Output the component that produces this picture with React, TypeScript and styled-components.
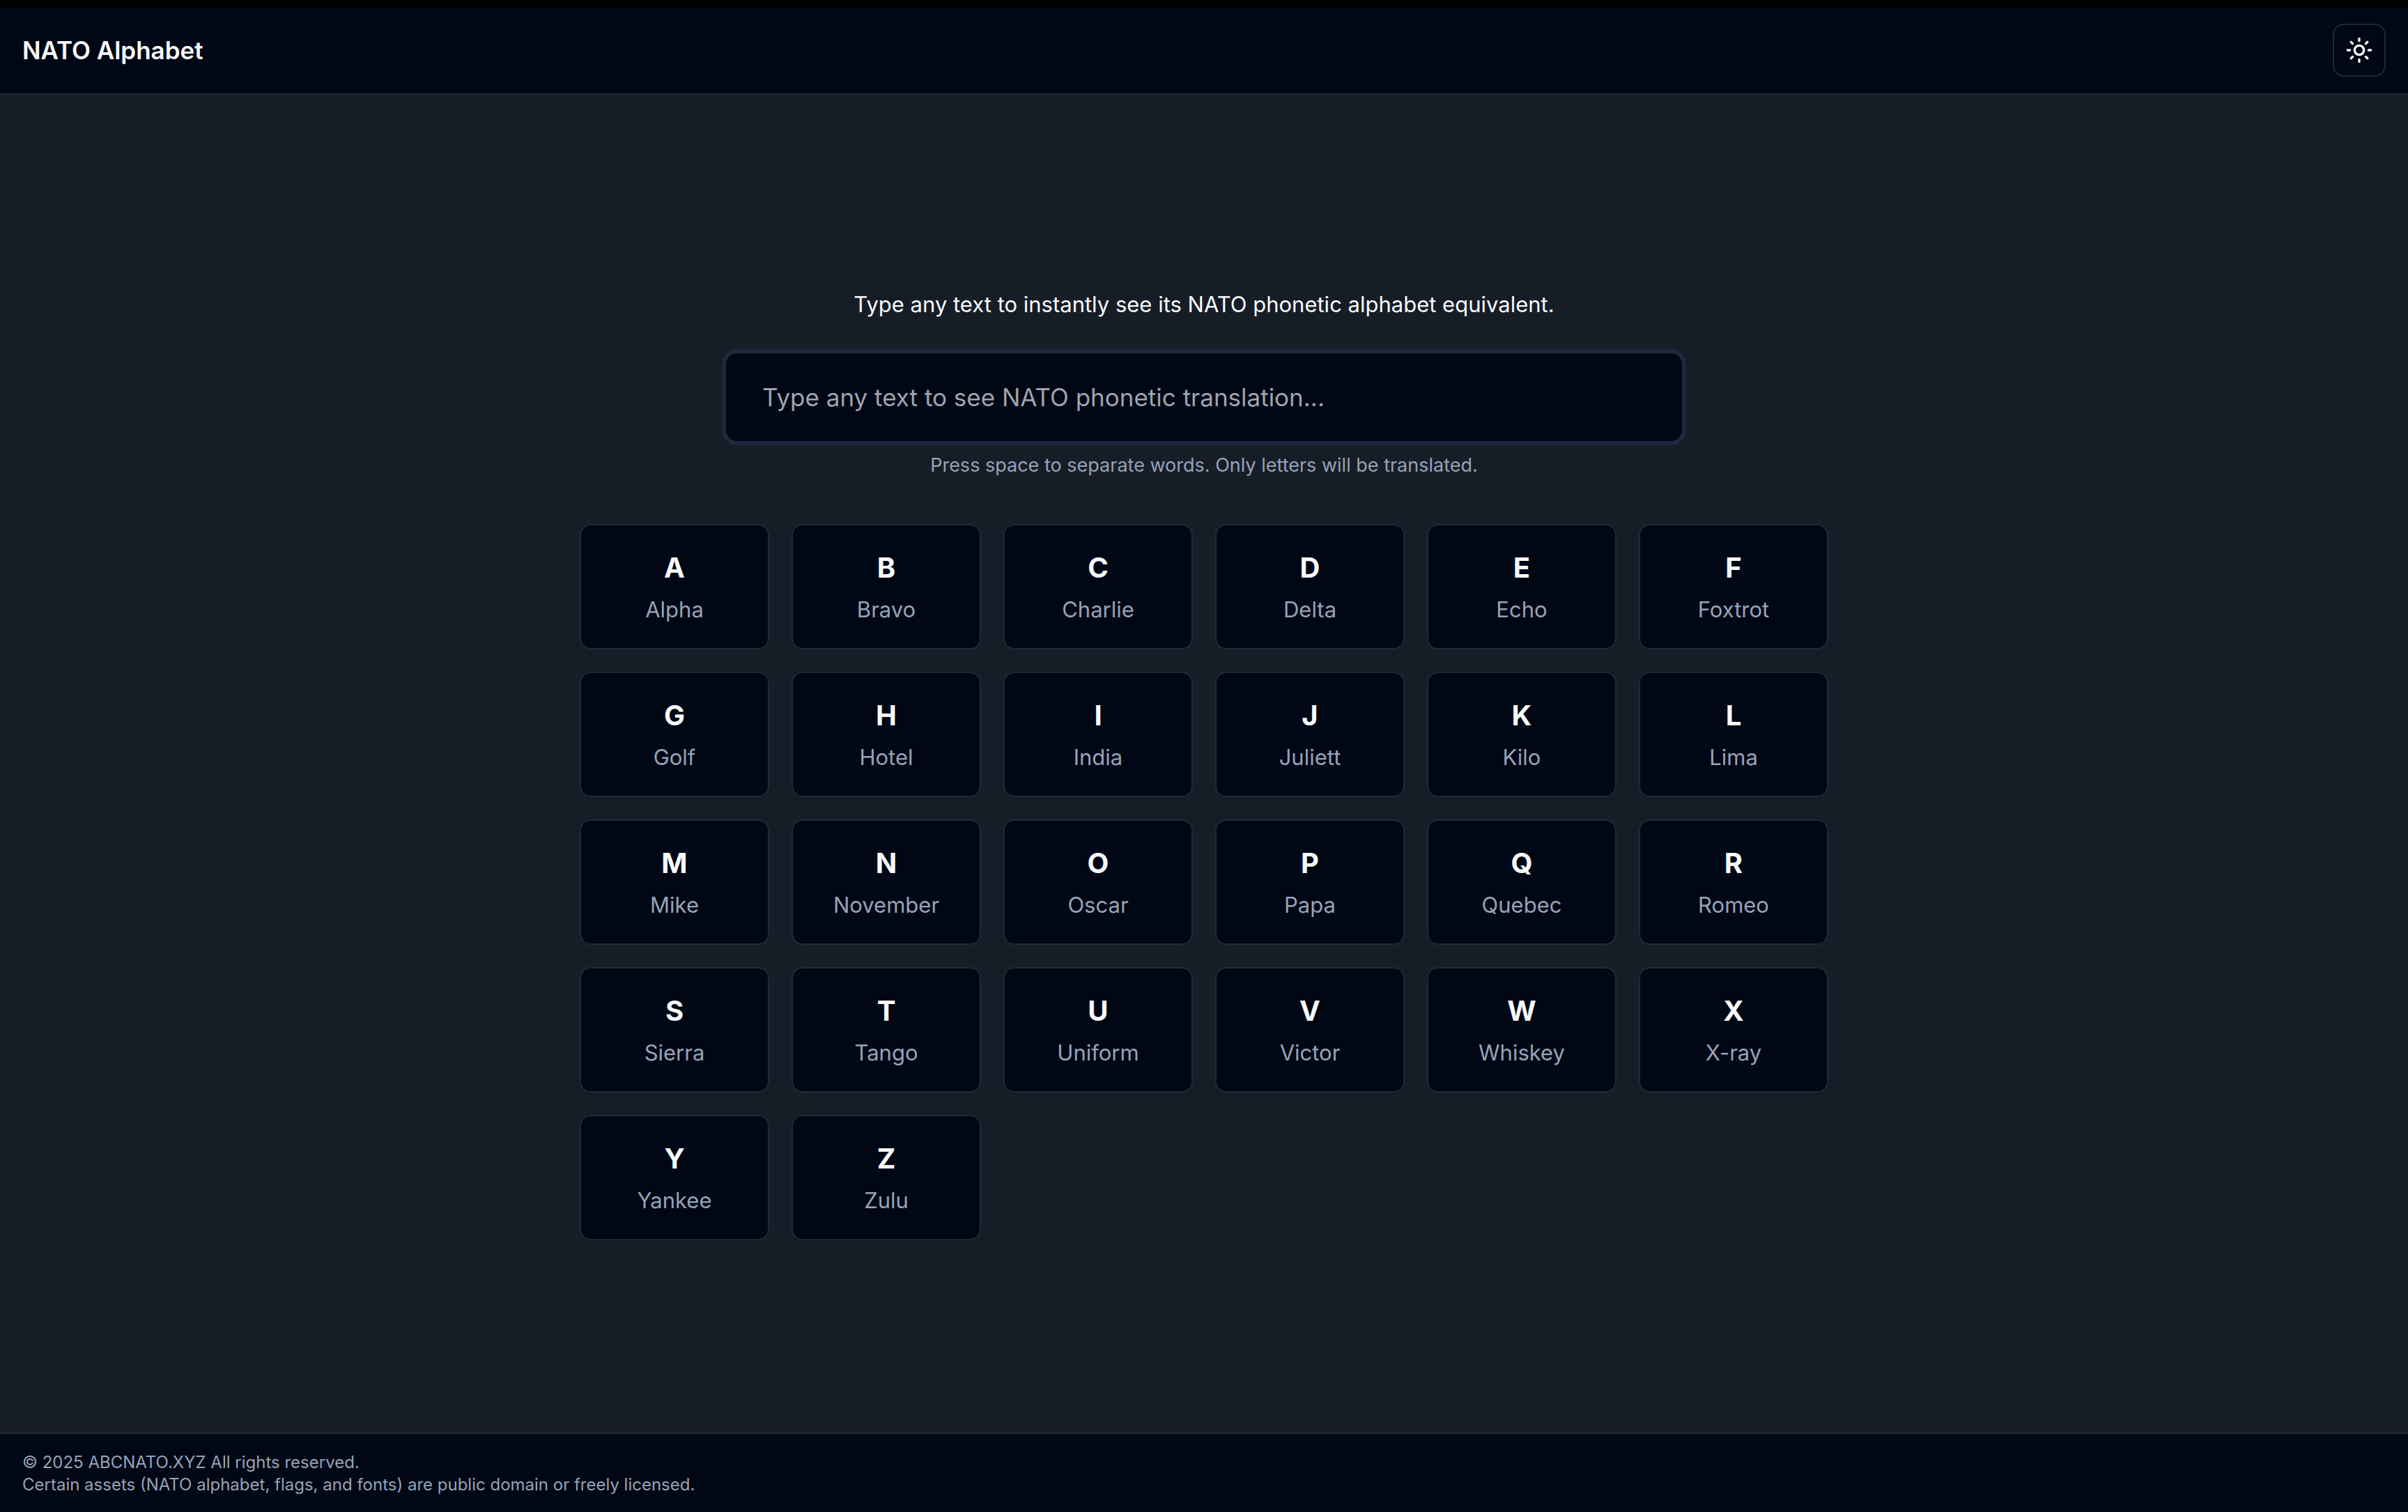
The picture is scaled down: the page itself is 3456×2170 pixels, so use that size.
import React, { useState } from "react";
import styled, { createGlobalStyle } from "styled-components";

const GlobalStyle = createGlobalStyle`
  * { box-sizing: border-box; }
  body {
    margin: 0;
    background: #171d27;
    color: #f8fafc;
    font-family: Inter, "Liberation Sans", sans-serif;
    -webkit-font-smoothing: antialiased;
  }
`;

const Page = styled.div`
  min-height: 100vh;
  display: flex;
  flex-direction: column;
  border-top: 11px solid #000000;
`;

const Header = styled.header`
  display: flex;
  align-items: center;
  justify-content: space-between;
  padding: 23px 32px 24px;
  background: #010714;
  border-bottom: 2px solid #1f293b;
`;

const Title = styled.h1`
  margin: 0;
  font-size: 35px;
  line-height: 56px;
  font-weight: 600;
`;

const ThemeButton = styled.button`
  display: grid;
  place-items: center;
  width: 76px;
  height: 76px;
  padding: 0;
  color: #f8fafc;
  background: transparent;
  border: 2px solid #1f293b;
  border-radius: 16px;
  cursor: pointer;
`;

const Main = styled.main`
  flex: 1;
  display: flex;
  flex-direction: column;
  align-items: center;
  justify-content: center;
  padding: 33px 32px 32px;
`;

const Intro = styled.label`
  font-size: 31px;
  line-height: 48px;
  text-align: center;
`;

const TextField = styled.input`
  width: 100%;
  max-width: 1384px;
  height: 138px;
  margin-top: 40px;
  padding: 0 52px;
  color: #f8fafc;
  background: #010714;
  border: 6px solid #1d283d;
  border-radius: 22px;
  font-family: inherit;
  font-size: 35px;
  outline: none;
  &::placeholder { color: #9fa3ad; opacity: 1; }
`;

const Hint = styled.p`
  margin: 9px 0 0;
  color: #96a3b8;
  font-size: 27px;
  line-height: 40px;
  text-align: center;
`;

const CardGrid = styled.ul`
  display: grid;
  grid-template-columns: repeat(6, 1fr);
  gap: 32px;
  width: 100%;
  max-width: 1792px;
  margin: 64px 0 0;
  padding: 0;
  list-style: none;
`;

const Card = styled.li`
  display: flex;
  flex-direction: column;
  align-items: center;
  gap: 4px;
  padding: 29px 30px 31px;
  background: #010714;
  border: 2px solid #1f293b;
  border-radius: 16px;
`;

const Letter = styled.span`
  font-size: 40px;
  line-height: 64px;
  font-weight: 700;
`;

const Word = styled.span`
  color: #96a3b8;
  font-size: 31px;
  line-height: 48px;
`;

const Footer = styled.footer`
  padding: 25px 32px 23px;
  color: #96a3b8;
  background: #010714;
  border-top: 2px solid #1f293b;
  font-size: 24px;
  line-height: 32px;
`;

const Notice = styled.p`
  margin: 0;
`;

const words = [
  "Alpha", "Bravo", "Charlie", "Delta", "Echo", "Foxtrot",
  "Golf", "Hotel", "India", "Juliett", "Kilo", "Lima",
  "Mike", "November", "Oscar", "Papa", "Quebec", "Romeo",
  "Sierra", "Tango", "Uniform", "Victor", "Whiskey", "X-ray",
  "Yankee", "Zulu",
];

function SunIcon() {
  return (
    <svg width="40" height="40" viewBox="0 0 24 24" fill="none" stroke="currentColor" strokeWidth="2" strokeLinecap="round" aria-hidden="true">
      <circle cx="12" cy="12" r="4" />
      <path d="M12 2v2M12 20v2M4.93 4.93l1.41 1.41M17.66 17.66l1.41 1.41M2 12h2M20 12h2M6.34 17.66l-1.41 1.41M19.07 4.93l-1.41 1.41" />
    </svg>
  );
}

export default function App() {
  const [text, setText] = useState("");
  const typed = text.toUpperCase().replace(/[^A-Z]/g, "");
  const shown = typed ? [...typed].map((c) => words[c.charCodeAt(0) - 65]) : words;

  return (
    <Page>
      <GlobalStyle />
      <Header>
        <Title>NATO Alphabet</Title>
        <ThemeButton type="button" aria-label="Toggle theme">
          <SunIcon />
        </ThemeButton>
      </Header>
      <Main>
        <Intro htmlFor="message">Type any text to instantly see its NATO phonetic alphabet equivalent.</Intro>
        <TextField
          id="message"
          type="text"
          placeholder="Type any text to see NATO phonetic translation..."
          value={text}
          onChange={(event) => setText(event.target.value)}
        />
        <Hint>Press space to separate words. Only letters will be translated.</Hint>
        <CardGrid>
          {shown.map((word, index) => (
            <Card key={index}>
              <Letter>{word[0]}</Letter>
              <Word>{word}</Word>
            </Card>
          ))}
        </CardGrid>
      </Main>
      <Footer>
        <Notice>© 2025 ABCNATO.XYZ All rights reserved.</Notice>
        <Notice>Certain assets (NATO alphabet, flags, and fonts) are public domain or freely licensed.</Notice>
      </Footer>
    </Page>
  );
}
